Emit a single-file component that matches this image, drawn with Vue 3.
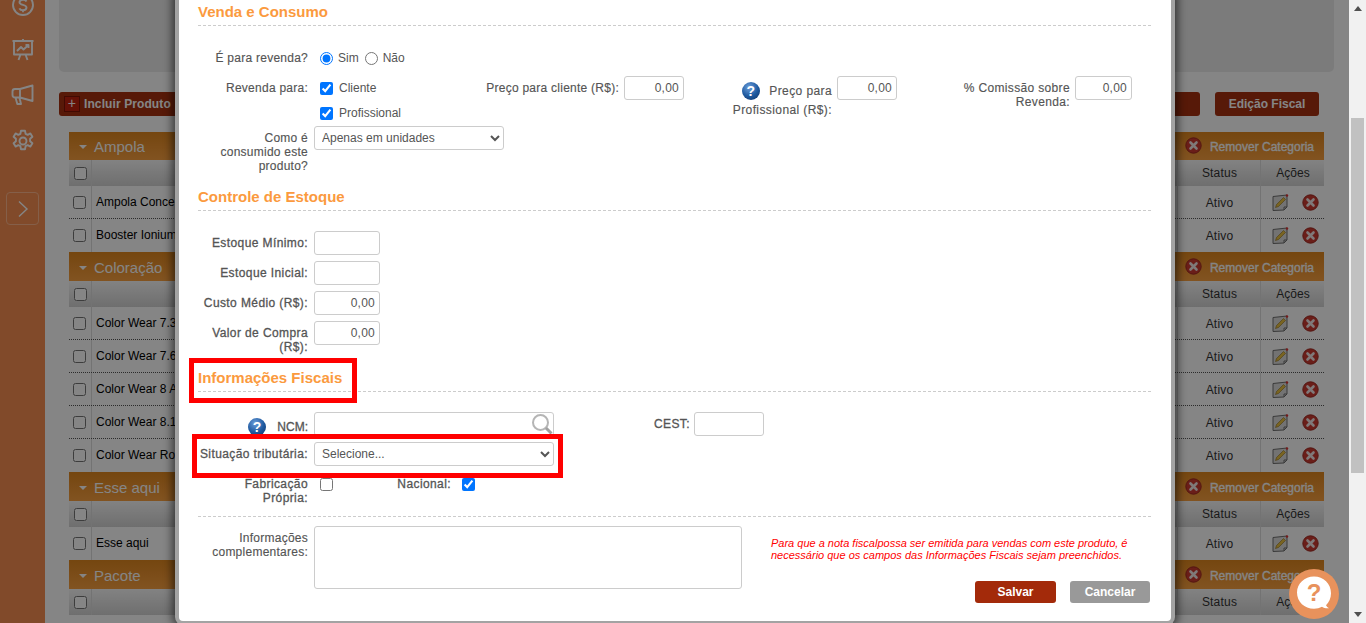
<script setup>
const groups = [
  { name: 'Ampola', rows: ['Ampola Concentrada', 'Booster Ionium'] },
  { name: 'Coloração', rows: ['Color Wear 7.3', 'Color Wear 7.6', 'Color Wear 8 A', 'Color Wear 8.1', 'Color Wear Ro'] },
  { name: 'Esse aqui', rows: ['Esse aqui'] },
  { name: 'Pacote', rows: [] },
]
</script>

<template>
  <div class="page">
    <aside class="side">
      <svg class="si dollar" width="24" height="24" viewBox="0 0 24 24"><circle cx="12" cy="12" r="10"/><path d="M15.5 8.5c-.6-1.2-2-1.800-3.500-1.800-2 0-3.500 1-3.500 2.600 0 3.400 7 1.800 7 5.300 0 1.700-1.600 2.700-3.500 2.700-1.600 0-3-.7-3.600-2M12 4.800v1.900M12 17.300v1.900"/></svg>
      <svg class="si chart" width="24" height="24" viewBox="0 0 24 24"><path d="M1.500 3h21M3 3v13.500h18V3M12 1v2M7.500 22l2-5.500M16.500 22l-2-5.500M6 13l4-4 2.500 2.500L17.500 7M14.500 7h3v3"/></svg>
      <svg class="si mega" width="24" height="24" viewBox="0 0 24 24"><path d="M21.500 2.500v15.500L9 14.500H4c-1.500 0-2.500-1-2.500-2.500V8.500C1.500 7 2.500 6 4 6h5zM9 6v8.500M4.500 14.500l1.800 6.500h3.700L8.500 15"/></svg>
      <svg class="si gear" width="24" height="24" viewBox="0 0 24 24"><circle cx="12" cy="12" r="3.500"/><path d="M10 1.800h4l.6 3 2.100 1 2.700-1.400 2 3.400-2.300 2 0 2.400 2.300 2-2 3.400-2.700-1.400-2.100 1-.6 3h-4l-.6-3-2.100-1-2.700 1.400-2-3.400 2.300-2 0-2.400-2.300-2 2-3.400 2.700 1.400 2.100-1z"/></svg>
      <div class="expand">
        <svg width="12" height="18" viewBox="0 0 12 18"><path d="M2 1.500 10 9l-8 7.500" fill="none" stroke="currentColor" stroke-width="1.400"/></svg>
      </div>
    </aside>

    <main class="main">
      <div class="panel"></div>
      <div class="toolbar">
        <button class="tbtn include"><span class="plus">+</span>Incluir Produto</button>
        <span class="spacer"></span>
        <button class="tbtn wide">Saída Rápida</button>
        <button class="tbtn fiscal">Edição Fiscal</button>
      </div>
      <section class="tbl">
        <div v-for="g in groups" :key="g.name" class="group">
          <div class="cat">
            <span class="tri"></span>
            <span class="cat-name">{{ g.name }}</span>
            <span class="spacer"></span>
            <svg class="xic" width="17" height="17" viewBox="0 0 17 17"><circle cx="8.500" cy="8.500" r="7.700" fill="#cc3a30" stroke="#a02a22"/><path d="m5.500 5.500 6 6m0-6-6 6" stroke="#f4e8e8" stroke-width="2.600" stroke-linecap="round"/></svg>
            <span class="rm">Remover Categoria</span>
          </div>
          <div class="thead">
            <span class="c-check"><input type="checkbox" /></span>
            <span class="c-name"></span>
            <span class="c-status">Status</span>
            <span class="c-act">Ações</span>
          </div>
          <div v-for="r in g.rows" :key="r" class="row">
            <span class="c-check"><input type="checkbox" /></span>
            <span class="c-name">{{ r }}</span>
            <span class="c-status">Ativo</span>
            <span class="c-act icons">
              <svg width="17" height="17" viewBox="0 0 17 17"><path d="M1 2.500 15 1v12l-3 3-11 .5z" fill="#dcdcdc" stroke="#707070"/><path d="M12 16v-3h3" fill="none" stroke="#707070"/><path d="m3.500 13.500 1-3 7-7 2 2-7 7z" fill="#e8c040" stroke="#806010" stroke-width=".5"/><circle cx="15" cy="1.500" r="1.200" fill="#d33"/></svg>
              <svg width="17" height="17" viewBox="0 0 17 17"><circle cx="8.500" cy="8.500" r="7.700" fill="#cc3a30" stroke="#a02a22"/><path d="m5.500 5.500 6 6m0-6-6 6" stroke="#f4e8e8" stroke-width="2.600" stroke-linecap="round"/></svg>
            </span>
          </div>
        </div>
      </section>
    </main>

    <div class="scrollbar">
      <span class="arrow arrow-up"></span>
      <span class="thumb"></span>
      <span class="arrow arrow-down"></span>
    </div>

    <div class="overlay"></div>

    <div class="modal">
      <h3 class="head">Venda e Consumo</h3>
      <div class="line r1">
        <label class="lbl">É para revenda?</label>
        <label class="opt radio"><input type="radio" name="rev" checked />Sim</label>
        <label class="opt radio"><input type="radio" name="rev" />Não</label>
      </div>
      <div class="resale">
        <label class="lbl mid">Revenda para:</label>
        <div class="checks">
          <label class="opt"><input type="checkbox" checked />Cliente</label>
          <label class="opt"><input type="checkbox" checked />Profissional</label>
        </div>
        <label class="lbl mid w-cli">Preço para cliente (R$):</label>
        <input class="field num w60" value="0,00" />
        <label class="lbl w-pro">
          <svg class="help" width="18" height="18" viewBox="0 0 18 18"><use href="#q" /></svg>
          Preço para Profissional (R$):
        </label>
        <input class="field num w60" value="0,00" />
        <label class="lbl w-com">% Comissão sobre Revenda:</label>
        <input class="field num w57" value="0,00" />
      </div>
      <div class="line r-como">
        <label class="lbl stack">Como é consumido este produto?</label>
        <select class="field w190"><option>Apenas em unidades</option></select>
      </div>

      <h3 class="head">Controle de Estoque</h3>
      <div class="stock">
        <div class="line"><label class="lbl strong">Estoque Mínimo:</label><input class="field w66" /></div>
        <div class="line"><label class="lbl strong">Estoque Inicial:</label><input class="field w66" /></div>
        <div class="line"><label class="lbl strong">Custo Médio (R$):</label><input class="field num w66" value="0,00" /></div>
        <div class="line top"><label class="lbl stack strong">Valor de Compra (R$):</label><input class="field num w66" value="0,00" /></div>
      </div>

      <h3 class="head">Informações Fiscais</h3>
      <div class="fiscal-rows">
        <div class="line">
          <label class="lbl ncm strong">
            <svg class="help2" width="18" height="18" viewBox="0 0 18 18"><use href="#q" /></svg><span>NCM:</span>
          </label>
          <div class="search">
            <input class="field w240" />
            <svg class="mag" width="22" height="22" viewBox="0 0 22 22"><circle cx="9.500" cy="9.500" r="7.500" fill="none" stroke="#b5b5b5" stroke-width="2"/><path d="m15 15 5.500 5.500" stroke="#a0a0a0" stroke-width="3"/></svg>
          </div>
          <label class="lbl cest strong">CEST:</label>
          <input class="field w70" />
        </div>
        <div class="line">
          <label class="lbl strong">Situação tributária:</label>
          <select class="field w240"><option>Selecione...</option></select>
        </div>
        <div class="line top fab">
          <label class="lbl stack strong">Fabricação Própria:</label>
          <input class="cb" type="checkbox" />
          <label class="lbl nac strong">Nacional:</label>
          <input class="cb" type="checkbox" checked />
        </div>
      </div>
      <div class="rule"></div>
      <div class="extra">
        <label class="lbl stack">Informações complementares:</label>
        <textarea class="field area"></textarea>
        <div class="aside">
          <p class="note">Para que a nota fiscalpossa ser emitida para vendas com este produto, é necessário que os campos das Informações Fiscais sejam preenchidos.</p>
          <div class="actions">
            <button class="act save">Salvar</button>
            <button class="act cancel">Cancelar</button>
          </div>
        </div>
      </div>

      <svg width="0" height="0" class="defs">
        <defs>
          <radialGradient id="qg" cx=".4" cy=".3" r=".8"><stop offset="0" stop-color="#6d9fdc"/><stop offset=".6" stop-color="#1f5aa0"/><stop offset="1" stop-color="#123a72"/></radialGradient>
          <g id="q">
            <circle cx="9" cy="9" r="9" fill="url(#qg)"/>
            <text x="9" y="14" text-anchor="middle" font-family="Liberation Sans" font-weight="700" font-size="14" fill="#fff">?</text>
          </g>
        </defs>
      </svg>
    </div>

    <div class="mark m1"></div>
    <div class="mark m2"></div>

    <button class="chat" aria-label="Ajuda">
      <svg width="38" height="38" viewBox="0 0 38 38"><path d="M19 1.500c9.500 0 17 7.300 17 16.700 0 5-2 9-5 12 .6 1.300 1.600 2.300 3 3-2.500.5-5-.2-7-1.400-2.400 1.300-5 2-8 2-9.500 0-17-7-17-16.300C2 8.800 9.500 1.500 19 1.500z" fill="#fff"/><text x="19" y="26" text-anchor="middle" font-family="Liberation Sans" font-weight="700" font-size="24" fill="#e8925c">?</text></svg>
    </button>
  </div>
</template>

<style>
html, body { margin: 0; height: 100%; overflow: hidden; background: #fff; }
</style>

<style scoped>
.page {
  position: relative;
  display: flex;
  width: 1366px;
  height: 623px;
  overflow: hidden;
  font-family: "Liberation Sans", Arial, sans-serif;
  font-size: 12px;
  background: #fff;
}
.side {
  flex: none;
  width: 45px;
  height: 623px;
  background: #f78f52;
  display: flex;
  flex-direction: column;
  align-items: center;
  color: #fff;
}
.si { fill: none; stroke: #fff; stroke-width: 1.900; stroke-linejoin: round; flex: none; }
.dollar { margin-top: -7px; }
.chart { margin-top: 21px; }
.mega { margin-top: 21px; }
.gear { margin-top: 22px; }
.expand {
  flex: none;
  margin-top: 39px;
  width: 33px;
  height: 33px;
  box-sizing: border-box;
  border: 1px solid #ffb78c;
  border-radius: 4px;
  display: flex;
  align-items: center;
  justify-content: center;
}
.main { flex: none; width: 1304px; padding: 0 0 0 14px; box-sizing: border-box; }
.panel { height: 72px; width: 1275px; background: #ececec; border-radius: 0 0 5px 5px; }
.toolbar { display: flex; margin-top: 20px; width: 1260px; gap: 15px; }
.tbtn {
  height: 24px;
  border: 0;
  border-radius: 3px;
  background: #a83010;
  color: #fff;
  font: bold 12px "Liberation Sans", Arial, sans-serif;
  padding: 0 14px;
  display: flex;
  align-items: center;
}
.include { width: 170px; padding: 0 0 0 5px; letter-spacing: 0.1px; }
.wide { width: 120px; }
.fiscal { width: 104px; justify-content: center; padding: 0; }
.plus {
  width: 16px;
  height: 16px;
  background: #c2210f;
  border: 1px solid #7d1405;
  box-sizing: border-box;
  margin-right: 4px;
  line-height: 13px;
  text-align: center;
  font-weight: 400;
  font-size: 14px;
}
.spacer { flex: 1; }
.tbl { margin: 16px 0 0 10px; width: 1255px; }
.cat {
  height: 29px;
  background: linear-gradient(#e0871f, #f9a040);
  display: flex;
  align-items: center;
  color: #fff;
  padding: 2px 10px 0 0;
  box-sizing: border-box;
}
.group:first-child .cat { height: 28px; padding-top: 1px; }
.tri {
  width: 0;
  height: 0;
  border: 4px solid transparent;
  border-top: 4px solid #fff;
  border-bottom: 0;
  margin: 0 7px 0 10px;
}
.cat-name { font-size: 15px; }
.xic { margin-right: 8px; margin-top: -2px; }
.rm { font-size: 12px; -webkit-text-stroke: 0.35px #fff; }
.thead, .row { display: flex; align-items: center; }
.thead {
  height: 26px;
  background: linear-gradient(#fafafa, #d4d4d4);
  color: #222;
}
.row { height: 33px; background: #fff; color: #000; border-bottom: 1px dotted #555; box-sizing: border-box; }
.row:last-child { border-bottom: 0; }
.c-check {
  width: 23px;
  box-sizing: border-box;
  height: 100%;
  display: flex;
  align-items: center;
  justify-content: center;
  border-right: 1px solid #ddd;
}
.c-check input { margin: 0; width: 13px; height: 13px; }
.row .c-check input { margin-left: -1px; }
.c-name { width: 1086px; box-sizing: border-box; padding-left: 4px; height: 100%; line-height: 32px; border-right: 1px solid #ddd; white-space: nowrap; }
.thead .c-name { line-height: 26px; }
.c-status { width: 83px; box-sizing: border-box; height: 100%; text-align: center; line-height: 26px; border-right: 1px solid #ddd; color: #333; letter-spacing: 0.2px; padding-left: 1px; }
.row .c-status { line-height: 34px; }
.c-act { flex: 1; text-align: center; line-height: 26px; color: #333; padding-left: 1px; }
.icons { display: flex; gap: 13px; justify-content: center; align-items: center; padding-left: 5px; }

.scrollbar {
  flex: none;
  width: 17px;
  height: 623px;
  background: #f1f1f1;
  position: relative;
}
.thumb { position: absolute; top: 118px; left: 2px; width: 13px; height: 355px; background: #c1c1c1; }
.arrow { position: absolute; width: 0; height: 0; border: 4px solid transparent; left: 4.500px; }
.arrow-up { top: 6px; border-top: 0; border-bottom: 5px solid #505050; }
.arrow-down { bottom: 6px; border-bottom: 0; border-top: 5px solid #505050; }

.overlay {
  position: absolute;
  left: 0;
  top: 0;
  width: 1349px;
  height: 623px;
  background: rgba(0, 0, 0, 0.48);
}

.modal {
  position: absolute;
  left: 175px;
  top: -10px;
  width: 1000px;
  height: 635px;
  box-sizing: border-box;
  background: #fff;
  border: 4px solid #a3a3a3;
  border-top: 0;
  border-radius: 8px;
  padding: 10px 20px 0 19px;
  box-shadow: 0 0 8px 3px rgba(0, 0, 0, 0.55);
  color: #555;
  font-size: 12px;
  letter-spacing: 0.25px;
}
.head {
  margin: 0;
  height: 26px;
  line-height: 23px;
  box-sizing: border-box;
  border-bottom: 1px dashed #ccc;
  color: #fb9a3e;
  font-size: 15px;
  font-weight: bold;
  letter-spacing: 0;
}
.line { display: flex; align-items: center; height: 24px; }
.line.top { align-items: flex-start; }
.r1 { margin-top: 20px; }
.lbl { width: 110px; margin-right: 6px; text-align: right; flex: none; line-height: 14px; -webkit-text-stroke: 0.15px #555; }
.strong { letter-spacing: 0.4px; -webkit-text-stroke: 0.3px #555; }
.stack { width: 100px; margin-left: 10px; padding-top: 5px; }
.mid { line-height: 24px; }
.opt { display: flex; align-items: center; height: 24px; line-height: 24px; white-space: nowrap; padding-left: 6px; letter-spacing: 0; }
.opt input { width: 13px; height: 13px; margin: 0 6px 0 0; }
.opt.radio input { margin-right: 5px; }
.checks .opt + .opt { margin-top: 1px; }
.resale { display: flex; margin-top: 6px; height: 50px; align-items: flex-start; }
.checks { width: 170px; flex: none; }
.w-cli { width: 135px; margin-right: 5px; white-space: nowrap; }
.w-pro { width: 100px; margin: 6px 5px 0 48px; line-height: 19px; letter-spacing: 0.4px; }
.help { vertical-align: -5px; margin-right: 6px; }
.w-com { width: 108px; margin: 5px 5px 0 65px; letter-spacing: 0.35px; }
.field {
  box-sizing: border-box;
  height: 24px;
  border: 1px solid #ccc;
  border-radius: 3px;
  background: #fff;
  color: #555;
  font: 12px "Liberation Sans", Arial, sans-serif;
  letter-spacing: 0.25px;
  padding: 0 4px;
  outline: none;
  flex: none;
}
select.field { padding: 0 3px; letter-spacing: 0; }
.num { text-align: right; }
.w60 { width: 60px; }
.w57 { width: 57px; }
.w66 { width: 66px; }
.w70 { width: 70px; }
.w190 { width: 190px; }
.w240 { width: 240px; }
.r-como { align-items: flex-start; height: 59px; }
.stock { margin-top: 20px; display: flex; flex-direction: column; gap: 6px; height: 135px; }
.fiscal-rows { margin-top: 20px; display: flex; flex-direction: column; gap: 6px; }
.ncm { padding-top: 5px; display: flex; justify-content: flex-end; align-items: center; gap: 11px; letter-spacing: 0; }
.help2 { flex: none; margin-top: 1px; }
.search { position: relative; }
.mag { position: absolute; right: 1px; top: 1px; }
.cest { width: 50px; margin: 0 4px 0 86px; }
.fab { margin-top: 5px; height: 33px; }
.fab .stack { padding-top: 0; }
.fab .cb { margin-top: 1px; }
.fab .nac { margin-top: 0; }
.cb { width: 13px; height: 13px; margin: 0 0 0 6px; flex: none; }
.nac { width: 60px; margin: 0 5px 0 58px; }
.rule { margin-top: 6px; border-bottom: 1px dashed #ccc; height: 0; }
.extra { display: flex; margin-top: 9px; align-items: flex-start; }
.area { width: 428px; height: 63px; resize: none; }
.aside { margin-left: 29px; width: 379px; flex: none; }
.note {
  margin: 11px 0 0;
  color: #f00;
  font-size: 11px;
  font-style: italic;
  line-height: 12px;
  letter-spacing: 0;
}
.actions { display: flex; justify-content: flex-end; gap: 14px; margin-top: 20px; }
.act {
  height: 22px;
  width: 81px;
  border: 0;
  border-radius: 3px;
  color: #fff;
  font: bold 12px "Liberation Sans", Arial, sans-serif;
  padding: 0;
}
.save { background: #a32a0a; }
.cancel { background: #999; width: 80px; }
.defs { position: absolute; }

.mark { position: absolute; border: 5px solid #f00; box-sizing: border-box; pointer-events: none; }
.m1 { left: 189px; top: 358px; width: 168px; height: 45px; }
.m2 { left: 192px; top: 434px; width: 371px; height: 44px; }

.chat {
  position: absolute;
  left: 1289px;
  top: 569px;
  width: 50px;
  height: 50px;
  border: 0;
  padding: 0;
  border-radius: 50%;
  background: #e8925c;
  display: flex;
  align-items: center;
  justify-content: center;
}
</style>
